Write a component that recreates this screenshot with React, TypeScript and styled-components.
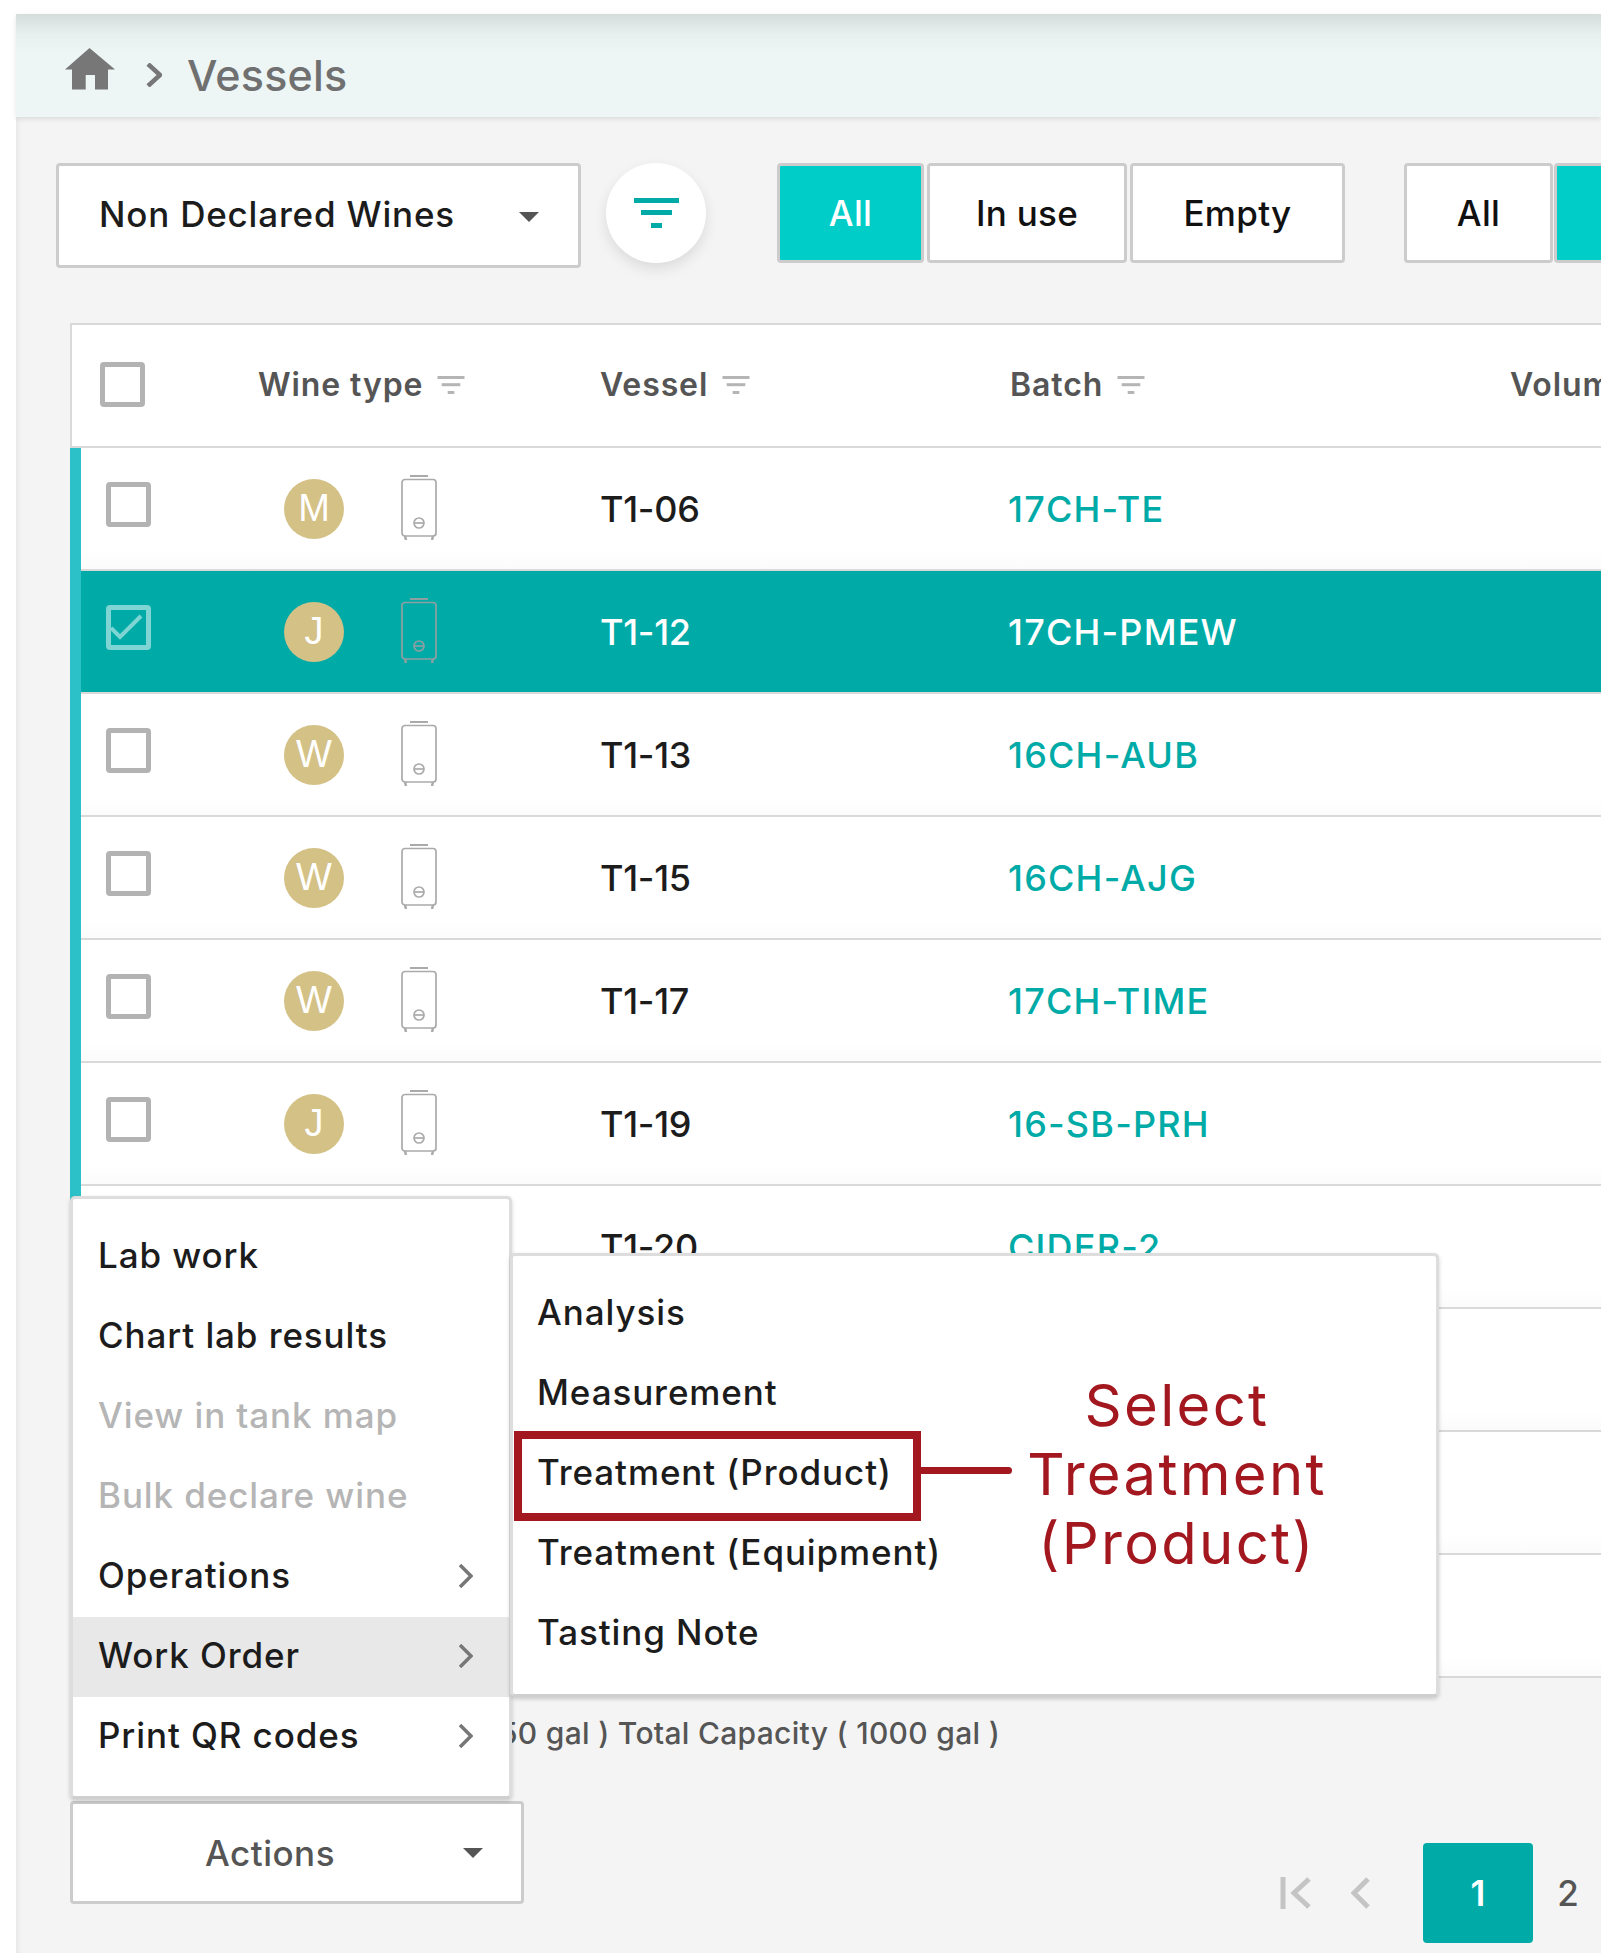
import React from 'react';
import styled, { createGlobalStyle } from 'styled-components';

const FONT = `Inter, "Open Sans", sans-serif`;
const TEAL = '#00aba7';
const BRIGHT_TEAL = '#00cdc7';
const RED = '#a3171f';
const BORDER = '#cccccc';

const GlobalStyle = createGlobalStyle`
    html, body {
        margin: 0;
        padding: 0;
        background: #ffffff;
    }
    body {
        font-family: ${FONT};
    }
`;

const Page = styled.div`
    box-sizing: border-box;
    width: 1601px;
    height: 1953px;
    padding: 14px 0 0 16px;
    overflow: hidden;
    background: #ffffff;
`;

const Content = styled.div`
    height: 1939px;
    background: #f4f4f4;
    box-shadow: inset 5px 0 5px -3px rgba(0, 0, 0, 0.06);
`;

const Breadcrumb = styled.header`
    box-sizing: border-box;
    height: 103px;
    display: flex;
    align-items: center;
    padding: 18px 0 0 49px;
    background: linear-gradient(#d4dddc 0, #e7f0ef 20px, #edf6f5 40px);
    box-shadow: 0 2px 5px rgba(0, 0, 0, 0.1);
`;

const HomeIcon = styled.svg`
    width: 50px;
    height: 42px;
    margin: -12px 31px 0 0;
    fill: #777777;
`;

const BreadcrumbChevron = styled.svg`
    width: 16px;
    height: 24px;
    margin-right: 25px;
    fill: none;
    stroke: #777777;
    stroke-width: 4.5;
`;

const Title = styled.h1`
    margin: 0;
    font-size: 43px;
    font-weight: 500;
    letter-spacing: 0.2px;
    color: #707070;
`;

const Toolbar = styled.div`
    display: flex;
    align-items: flex-start;
    margin: 46px 0 55px 40px;
    white-space: nowrap;
`;

const Select = styled.div`
    box-sizing: border-box;
    flex: none;
    width: 525px;
    height: 105px;
    display: flex;
    align-items: center;
    justify-content: space-between;
    padding: 0 39px 3px 40px;
    background: #ffffff;
    border: 3px solid ${BORDER};
    border-radius: 4px;
    font-size: 35px;
    font-weight: 500;
    letter-spacing: 0.8px;
    color: #1c1c1c;
`;

const Caret = styled.span`
    flex: none;
    width: 0;
    height: 0;
    border-left: 10.5px solid transparent;
    border-right: 10.5px solid transparent;
    border-top: 10px solid #555555;
`;

const SelectCaret = styled(Caret)`
    margin-top: 6px;
`;

const FilterButton = styled.div`
    flex: none;
    width: 100px;
    height: 100px;
    margin: 0 71px 0 25px;
    display: flex;
    align-items: center;
    justify-content: center;
    background: #ffffff;
    border-radius: 50%;
    box-shadow: 0 6px 14px rgba(0, 0, 0, 0.1);
`;

const FilterGlyph = styled.svg<{ $small?: boolean }>`
    flex: none;
    width: ${(p) => (p.$small ? 28 : 45)}px;
    height: ${(p) => (p.$small ? 18 : 30)}px;
    fill: ${(p) => (p.$small ? '#b5b5b5' : TEAL)};
`;

const ButtonGroup = styled.div<{ $gap: number }>`
    flex: none;
    display: flex;
    gap: ${(p) => p.$gap}px;
    margin-right: 59px;
`;

const ToggleButton = styled.div<{ $active?: boolean; $width: number }>`
    box-sizing: border-box;
    width: ${(p) => p.$width}px;
    height: 100px;
    display: flex;
    align-items: center;
    justify-content: center;
    background: ${(p) => (p.$active ? BRIGHT_TEAL : '#ffffff')};
    border: 3px solid ${BORDER};
    border-radius: 4px;
    font-size: 35px;
    font-weight: 500;
    letter-spacing: 0.3px;
    color: ${(p) => (p.$active ? '#ffffff' : '#111111')};
`;

const Table = styled.section`
    margin-left: 54px;
    background: #ffffff;
    border-top: 2px solid #d9d9d9;
    border-left: 2px solid #d9d9d9;
`;

const HeaderRow = styled.div`
    height: 121px;
    display: grid;
    grid-template-columns: 186px 342px 410px 500px 1fr;
    align-items: center;
    border-bottom: 2px solid #d9d9d9;
`;

const HeaderCheckCell = styled.div`
    padding: 0 0 3px 28px;
`;

const HeaderCell = styled.div`
    display: flex;
    align-items: center;
    gap: 14px;
    margin-top: -2px;
    font-size: 32px;
    font-weight: 600;
    letter-spacing: 0.9px;
    color: #555555;
    white-space: nowrap;
`;

const Checkbox = styled.div<{ $checked?: boolean }>`
    box-sizing: border-box;
    position: relative;
    width: 45px;
    height: 45px;
    border: 5px solid ${(p) => (p.$checked ? '#7fd5d3' : '#b3b3b3')};
    border-radius: 4px;
    background: ${(p) => (p.$checked ? 'transparent' : '#ffffff')};
`;

const CheckMark = styled.svg`
    position: absolute;
    left: -1px;
    top: 4px;
    width: 36px;
    height: 28px;
    fill: none;
    stroke: #7fd5d3;
    stroke-width: 4;
`;

const TableBody = styled.div`
    margin-left: -2px;
    border-left: 11px solid #2cc1c8;
`;

const Row = styled.div<{ $selected?: boolean }>`
    box-sizing: border-box;
    height: 123px;
    display: grid;
    grid-template-columns: 203px 117px 199px 408px 1fr;
    align-items: center;
    background: ${(p) => (p.$selected ? TEAL : 'linear-gradient(#ffffff 85%, #fbfbfb)')};
    border-bottom: 2px solid #d9d9d9;
`;

const CheckCell = styled.div`
    padding: 0 0 8px 25px;
`;

const Avatar = styled.div`
    width: 60px;
    height: 60px;
    display: flex;
    align-items: center;
    justify-content: center;
    border-radius: 50%;
    background: #d4c186;
    font-family: "Liberation Sans", Arial, sans-serif;
    font-size: 38px;
    color: #ffffff;
`;

const TankIcon = styled.svg<{ $selected?: boolean }>`
    display: block;
    width: 36px;
    height: 65px;
    margin-top: -2px;
    fill: none;
    stroke: ${(p) => (p.$selected ? '#8d9fa0' : '#aaaaaa')};
    stroke-width: 1.7;
`;

const VesselName = styled.div<{ $selected?: boolean }>`
    font-size: 36px;
    font-weight: 500;
    letter-spacing: -0.3px;
    color: ${(p) => (p.$selected ? '#ffffff' : '#1c1c1c')};
`;

const BatchName = styled.div<{ $selected?: boolean }>`
    font-size: 36px;
    font-weight: 500;
    letter-spacing: 1.2px;
    color: ${(p) => (p.$selected ? '#ffffff' : TEAL)};
`;

const Summary = styled.div`
    box-sizing: border-box;
    width: 984px;
    height: 123px;
    padding-top: 39px;
    text-align: right;
    white-space: nowrap;
    font-size: 30px;
    line-height: 32px;
    font-weight: 500;
    letter-spacing: 0.3px;
    color: #555555;
`;

const Footer = styled.div`
    display: flex;
    align-items: flex-start;
    padding-left: 54px;
`;

const ActionsWrap = styled.div`
    position: relative;
    flex: none;
`;

const ActionsButton = styled.div`
    box-sizing: border-box;
    width: 454px;
    height: 103px;
    display: flex;
    align-items: center;
    justify-content: space-between;
    padding: 0 38px 0 132px;
    background: #ffffff;
    border: 3px solid ${BORDER};
    border-radius: 4px;
    font-size: 35px;
    font-weight: 500;
    letter-spacing: 0.5px;
    color: #555555;
`;

const Menu = styled.div`
    box-sizing: border-box;
    position: absolute;
    background: #ffffff;
    border: 3px solid #dddddd;
    border-bottom-color: #cfcfcf;
    border-radius: 5px;
    box-shadow: 0 2px 4px rgba(0, 0, 0, 0.18);
    font-size: 35px;
    font-weight: 500;
    letter-spacing: 0.9px;
`;

const MainMenu = styled(Menu)`
    left: 0;
    bottom: calc(100% + 2px);
    z-index: 2;
    width: 442px;
    height: 603px;
    padding-top: 18px;
`;

const SubMenu = styled(Menu)`
    left: calc(100% + 1px);
    top: 54px;
    width: 929px;
    height: 444px;
    padding-top: 16px;
`;

const MenuItem = styled.div<{ $disabled?: boolean; $active?: boolean }>`
    box-sizing: border-box;
    height: 80px;
    display: flex;
    align-items: center;
    justify-content: space-between;
    padding: 0 36px 5px 25px;
    background: ${(p) => (p.$active ? '#e8e8e8' : 'transparent')};
    color: ${(p) => (p.$disabled ? '#b5b5b5' : '#1c1c1c')};
    white-space: nowrap;
`;

const SubMenuItem = styled(MenuItem)`
    padding: 0 0 0 24px;
`;

const MenuChevron = styled.svg`
    flex: none;
    width: 15px;
    height: 24px;
    margin-top: 3px;
    fill: none;
    stroke: #777777;
    stroke-width: 3.5;
`;

const Highlight = styled.div`
    box-sizing: border-box;
    position: absolute;
    left: 1px;
    top: 175px;
    width: 407px;
    height: 90px;
    border: 8px solid ${RED};

    &::after {
        content: '';
        position: absolute;
        left: 100%;
        top: 28px;
        margin-left: 8px;
        width: 91px;
        height: 7px;
        background: ${RED};
        border-radius: 0 4px 4px 0;
    }
`;

const Callout = styled.div`
    position: absolute;
    left: 484px;
    top: 115px;
    width: 360px;
    text-align: center;
    font-size: 58px;
    font-weight: 400;
    letter-spacing: 2.3px;
    line-height: 69px;
    color: ${RED};
`;

const Pager = styled.nav`
    flex: none;
    width: 321px;
    margin: 42px 0 0 auto;
    display: flex;
    align-items: center;
`;

const PagerIcon = styled.svg<{ $gap: number; $width: number }>`
    flex: none;
    width: ${(p) => p.$width}px;
    height: 32px;
    margin: 0 ${(p) => p.$gap}px 0 0;
    fill: none;
    stroke: #c4c4c4;
    stroke-width: 5;
`;

const PageCurrent = styled.div`
    flex: none;
    width: 110px;
    height: 100px;
    display: flex;
    align-items: center;
    justify-content: center;
    background: ${TEAL};
    border-radius: 4px;
    font-size: 35px;
    font-weight: 600;
    color: #ffffff;
`;

const PageNumber = styled.div`
    flex: none;
    width: 70px;
    text-align: center;
    font-size: 35px;
    font-weight: 500;
    color: #555555;
`;

const Filter = ({ small }: { small?: boolean }) => (
    <FilterGlyph $small={small} viewBox="0 0 45 30">
        <rect x="0" y="0" width="45" height="5" />
        <rect x="7" y="12" width="31" height="5" />
        <rect x="17" y="25" width="11" height="5" />
    </FilterGlyph>
);

const Tank = ({ selected }: { selected?: boolean }) => (
    <TankIcon $selected={selected} viewBox="0 0 36 65">
        <path d="M9 1H27" strokeWidth="2" />
        <rect x="1" y="4.5" width="34" height="56.5" rx="3" />
        <path d="M4 61l1 4M32 61l-1 4" strokeWidth="2.5" />
        <circle cx="18" cy="48" r="5" />
        <path d="M13 48H23" />
    </TankIcon>
);

const Chevron = () => (
    <MenuChevron viewBox="0 0 15 24">
        <path d="M2 1L13 12L2 23" />
    </MenuChevron>
);

type VesselRow = {
    type?: string;
    vessel?: string;
    batch?: string;
    selected?: boolean;
};

const ROWS: VesselRow[] = [
    { type: 'M', vessel: 'T1-06', batch: '17CH-TE' },
    { type: 'J', vessel: 'T1-12', batch: '17CH-PMEW', selected: true },
    { type: 'W', vessel: 'T1-13', batch: '16CH-AUB' },
    { type: 'W', vessel: 'T1-15', batch: '16CH-AJG' },
    { type: 'W', vessel: 'T1-17', batch: '17CH-TIME' },
    { type: 'J', vessel: 'T1-19', batch: '16-SB-PRH' },
    { vessel: 'T1-20', batch: 'CIDER-2' },
    {},
    {},
    {},
];

const App = () => {
    return (
        <Page>
            <GlobalStyle />
            <Content>
                <Breadcrumb>
                    <HomeIcon viewBox="0 0 50 42">
                        <path d="M24.5 0L50 21.5H43V41.5H30V27H20.7V41.5H7V21.5H0Z" />
                    </HomeIcon>
                    <BreadcrumbChevron viewBox="0 0 16 24">
                        <path d="M2 1L14 12L2 23" />
                    </BreadcrumbChevron>
                    <Title>Vessels</Title>
                </Breadcrumb>

                <Toolbar>
                    <Select>
                        Non Declared Wines
                        <SelectCaret />
                    </Select>
                    <FilterButton>
                        <Filter />
                    </FilterButton>
                    <ButtonGroup $gap={3}>
                        <ToggleButton $active $width={147}>All</ToggleButton>
                        <ToggleButton $width={200}>In use</ToggleButton>
                        <ToggleButton $width={215}>Empty</ToggleButton>
                    </ButtonGroup>
                    <ButtonGroup $gap={1}>
                        <ToggleButton $width={149}>All</ToggleButton>
                        <ToggleButton $active $width={200} />
                    </ButtonGroup>
                </Toolbar>

                <Table>
                    <HeaderRow>
                        <HeaderCheckCell>
                            <Checkbox />
                        </HeaderCheckCell>
                        <HeaderCell>Wine type <Filter small /></HeaderCell>
                        <HeaderCell>Vessel <Filter small /></HeaderCell>
                        <HeaderCell>Batch <Filter small /></HeaderCell>
                        <HeaderCell>Volume</HeaderCell>
                    </HeaderRow>
                    <TableBody>
                        {ROWS.map((row, index) => (
                            <Row key={index} $selected={row.selected}>
                                {row.type ? (
                                    <>
                                        <CheckCell>
                                            <Checkbox $checked={row.selected}>
                                                {row.selected && (
                                                    <CheckMark viewBox="0 0 36 28">
                                                        <path d="M1 14L10 23L31 2" />
                                                    </CheckMark>
                                                )}
                                            </Checkbox>
                                        </CheckCell>
                                        <Avatar>{row.type}</Avatar>
                                        <Tank selected={row.selected} />
                                    </>
                                ) : (
                                    <>
                                        <span />
                                        <span />
                                        <span />
                                    </>
                                )}
                                <VesselName $selected={row.selected}>{row.vessel}</VesselName>
                                <BatchName $selected={row.selected}>{row.batch}</BatchName>
                            </Row>
                        ))}
                    </TableBody>
                </Table>

                <Summary>Total Volume ( 550 gal ) Total Capacity ( 1000 gal )</Summary>

                <Footer>
                    <ActionsWrap>
                        <MainMenu>
                            <MenuItem>Lab work</MenuItem>
                            <MenuItem>Chart lab results</MenuItem>
                            <MenuItem $disabled>View in tank map</MenuItem>
                            <MenuItem $disabled>Bulk declare wine</MenuItem>
                            <MenuItem>Operations <Chevron /></MenuItem>
                            <MenuItem $active>Work Order <Chevron /></MenuItem>
                            <MenuItem>Print QR codes <Chevron /></MenuItem>
                            <SubMenu>
                                <SubMenuItem>Analysis</SubMenuItem>
                                <SubMenuItem>Measurement</SubMenuItem>
                                <SubMenuItem>Treatment (Product)</SubMenuItem>
                                <SubMenuItem>Treatment (Equipment)</SubMenuItem>
                                <SubMenuItem>Tasting Note</SubMenuItem>
                                <Highlight />
                                <Callout>Select<br />Treatment<br />(Product)</Callout>
                            </SubMenu>
                        </MainMenu>
                        <ActionsButton>
                            Actions
                            <Caret />
                        </ActionsButton>
                    </ActionsWrap>
                    <Pager>
                        <PagerIcon $width={32} $gap={39} viewBox="0 0 32 32">
                            <path d="M3 0V32M29 2L14 16L29 30" />
                        </PagerIcon>
                        <PagerIcon $width={19} $gap={53} viewBox="0 0 19 32">
                            <path d="M17 2L3 16L17 30" />
                        </PagerIcon>
                        <PageCurrent>1</PageCurrent>
                        <PageNumber>2</PageNumber>
                    </Pager>
                </Footer>
            </Content>
        </Page>
    );
};

export default App;
